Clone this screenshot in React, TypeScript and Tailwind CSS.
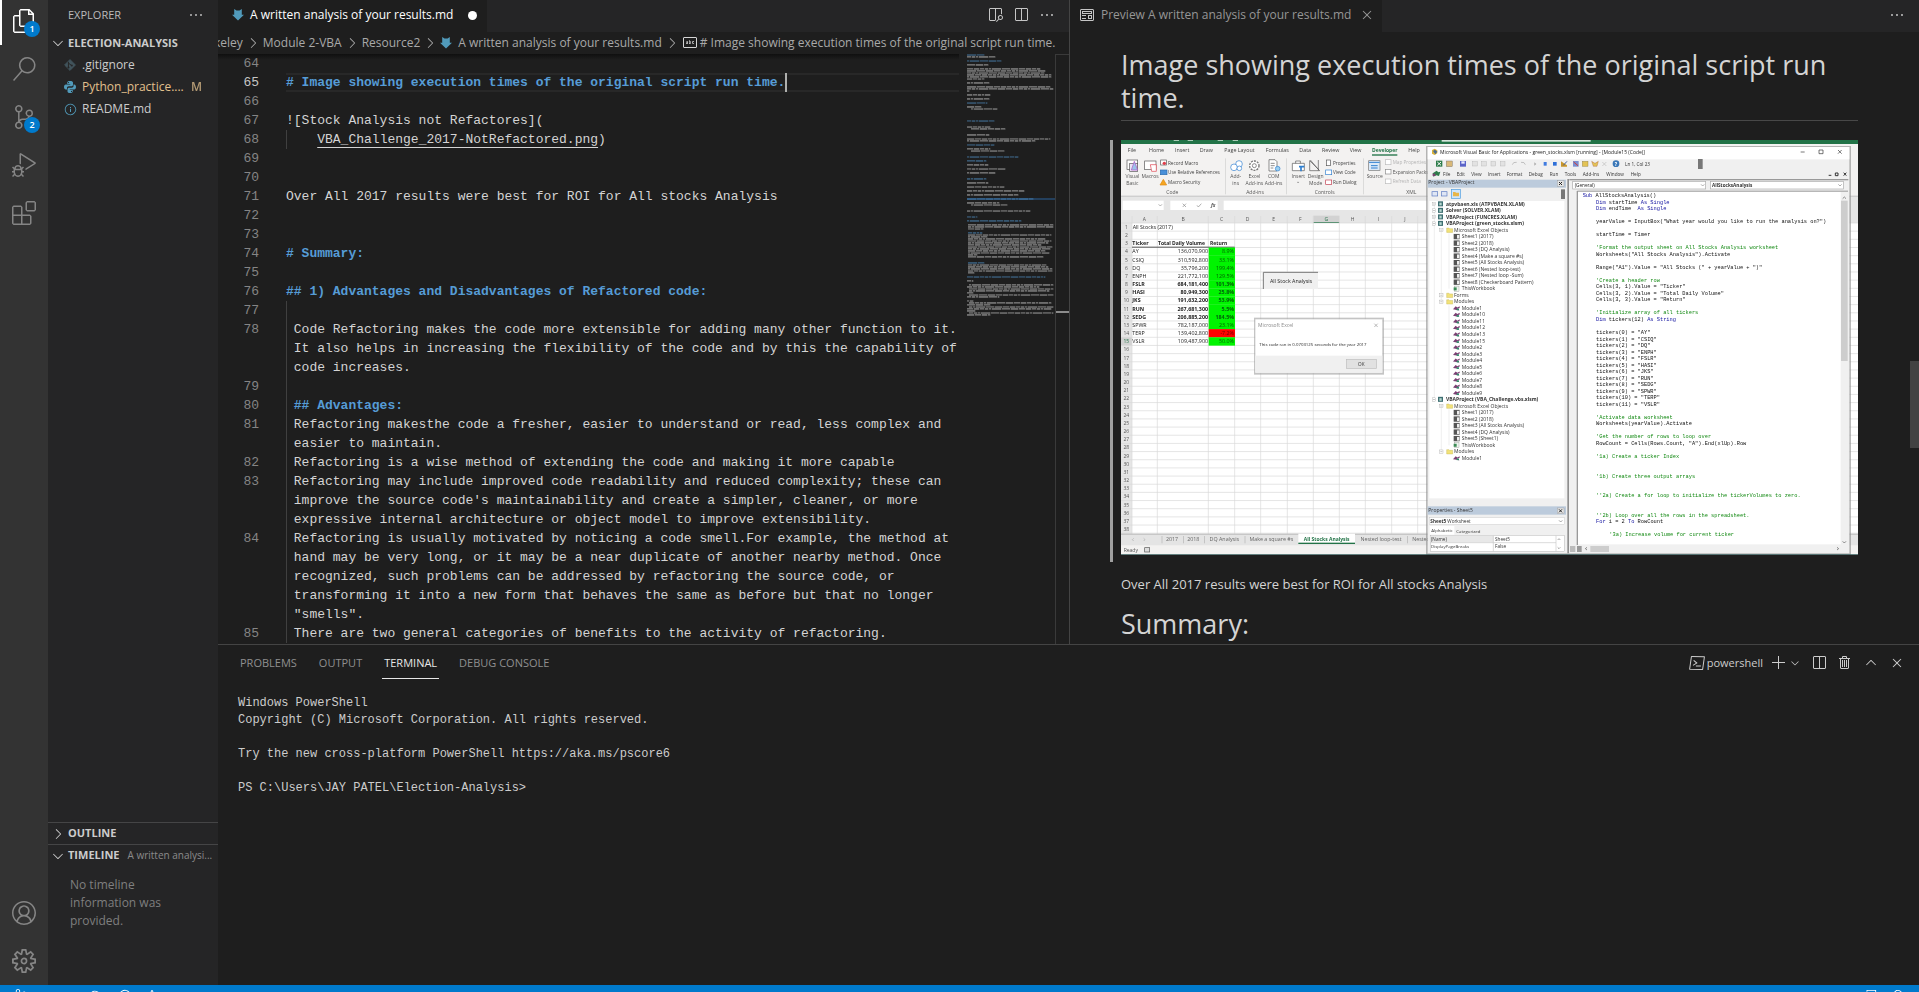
import React from "react";
import {
  VscFiles, VscSearch, VscSourceControl, VscDebugAlt, VscExtensions, VscAccount, VscSettingsGear,
  VscSplitHorizontal, VscOpenPreview, VscEllipsis, VscChevronRight, VscChevronDown, VscChevronUp,
  VscTerminalPowershell, VscAdd, VscTrash, VscClose, VscPreview, VscSymbolString, VscInfo,
  VscSync, VscError, VscWarning, VscFeedback, VscBell,
} from "react-icons/vsc";

/* ---------- file icons ---------- */

function MarkdownIcon() {
  return (
    <svg width="12" height="14" viewBox="0 0 12 14" className="shrink-0" aria-hidden="true">
      <path d="M2.2 1 4.500 2.600h3L9.800 1v5.700H12L6 12.500 0 6.700h2.200z" fill="#519aba" />
    </svg>
  );
}

function GitIcon() {
  return (
    <svg width="12" height="12" viewBox="0 0 12 12" className="shrink-0" aria-hidden="true">
      <path d="M6 .6 11.4 6 6 11.4.6 6z" fill="#41535b" stroke="#41535b" strokeLinejoin="round" />
      <path d="M4.4 2.8v6M4.6 4.2l3 2.4" stroke="#252526" fill="none" />
      <circle cx="4.5" cy="8.4" r="1" fill="#252526" />
      <circle cx="7.8" cy="6.4" r="1" fill="#252526" />
    </svg>
  );
}

function PythonIcon() {
  return (
    <svg width="12" height="12" viewBox="0 0 24 24" className="shrink-0" aria-hidden="true">
      <path
        d="M11.9 0C8 0 6.500 1.300 6.500 3v3h6v1H3.500C1.500 7 0 8.800 0 12s1.500 5 3.500 5H6v-3c0-2 1.500-3.500 3.500-3.500h5.500c1.600 0 3-1.300 3-3V3c0-1.800-1.800-3-6.100-3zM9 2a1.200 1.200 0 1 1 0 2.400A1.200 1.200 0 0 1 9 2z"
        fill="#519aba"
      />
      <path
        d="M12.100 24c3.900 0 5.400-1.300 5.400-3v-3h-6v-1h9c2 0 3.500-1.800 3.500-5s-1.500-5-3.500-5H19v3c0 2-1.500 3.500-3.500 3.500H10c-1.600 0-3 1.300-3 3V21c0 1.800 1.300 3 5.100 3zM15 22a1.200 1.200 0 1 1 0-2.400A1.200 1.200 0 0 1 15 22z"
        fill="#519aba"
      />
    </svg>
  );
}

/* ---------- activity bar ---------- */

type ActivityProps = { label: string; icon: React.ReactNode; active?: boolean; badge?: string };

function Activity({ label, icon, active, badge }: ActivityProps) {
  return (
    <button
      type="button"
      aria-label={label}
      className={
        "relative flex h-12 w-12 shrink-0 items-center justify-center " +
        (active ? "border-l-2 border-white pr-0.5 text-white" : "text-[#858585]")
      }
    >
      {icon}
      {badge && (
        <span className={"absolute top-6 flex h-4 w-4 items-center justify-center rounded-full bg-[#007acc] text-[9px] font-semibold text-white " + (active ? "left-[22px]" : "left-6")}>
          {badge}
        </span>
      )}
    </button>
  );
}

function ActivityBar() {
  return (
    <nav className="flex w-12 shrink-0 flex-col justify-between bg-[#333333]">
      <div className="-mt-[3px] flex flex-col">
        <Activity label="Explorer" icon={<VscFiles size={24} />} active badge="1" />
        <Activity label="Search" icon={<VscSearch size={24} />} />
        <Activity label="Source Control" icon={<VscSourceControl size={24} />} badge="2" />
        <Activity label="Run and Debug" icon={<VscDebugAlt size={24} />} />
        <Activity label="Extensions" icon={<VscExtensions size={24} />} />
      </div>
      <div className="flex flex-col">
        <Activity label="Accounts" icon={<VscAccount size={24} />} />
        <Activity label="Manage" icon={<VscSettingsGear size={24} />} />
      </div>
    </nav>
  );
}

/* ---------- side bar ---------- */

function SideBar() {
  return (
    <aside className="flex w-[170px] shrink-0 flex-col bg-[#252526] text-[12px] text-[#cccccc]">
      <div className="flex h-8 items-center justify-between pr-[14px] pb-0.5 pl-5 text-[11px] text-[#bbbbbb]">
        <h2>EXPLORER</h2>
        <button type="button" aria-label="Views and More Actions"><VscEllipsis size={16} /></button>
      </div>
      <button type="button" className="flex h-[22px] items-center gap-0.5 pl-0.5 text-[11px] font-bold">
        <VscChevronDown size={16} />
        ELECTION-ANALYSIS
      </button>
      <ul>
        <li className="flex h-[22px] items-center gap-1.5 pr-4 pl-4"><GitIcon />.gitignore</li>
        <li className="flex h-[22px] items-center gap-1.5 pr-4 pl-4 text-[#e2c08d]">
          <PythonIcon />
          <span className="flex-1">Python_practice....</span>
          <span className="font-semibold opacity-75">M</span>
        </li>
        <li className="flex h-[22px] items-center gap-1.5 pr-4 pl-4"><VscInfo size={13} className="-mr-px text-[#519aba]" />README.md</li>
      </ul>
      <div className="flex-1" />
      <button type="button" className="flex h-[22px] items-center gap-0.5 border-t border-[#454546] pl-0.5 text-[11px] font-bold">
        <VscChevronRight size={16} />
        OUTLINE
      </button>
      <button type="button" className="flex h-[22px] items-center gap-0.5 border-t border-[#454546] pl-0.5 text-[11px] font-bold">
        <VscChevronDown size={16} className="shrink-0" />
        TIMELINE
        <span className="ml-1.5 text-[10px] font-normal whitespace-nowrap text-[#8b8b8b]">A written analysi...</span>
      </button>
      <p className="h-[119px] pt-[10px] pr-8 pl-[22px] text-[12px] leading-[18px] text-[#7f7f7f]">
        No timeline information was provided.
      </p>
    </aside>
  );
}

/* ---------- editor ---------- */

type Line = { n?: number; text?: string; kind?: "head" | "link"; guide?: boolean; current?: boolean };

const lines: Line[] = [
  { n: 64 },
  { n: 65, text: "# Image showing execution times of the original script run time.", kind: "head", current: true },
  { n: 66 },
  { n: 67, text: "![Stock Analysis not Refactores](" },
  { n: 68, text: "VBA_Challenge_2017-NotRefactored.png", kind: "link", guide: true },
  { n: 69 },
  { n: 70 },
  { n: 71, text: "Over All 2017 results were best for ROI for All stocks Analysis" },
  { n: 72 },
  { n: 73 },
  { n: 74, text: "# Summary:", kind: "head" },
  { n: 75 },
  { n: 76, text: "## 1) Advantages and Disadvantages of Refactored code:", kind: "head" },
  { n: 77, guide: true },
  { n: 78, text: " Code Refactoring makes the code more extensible for adding many other function to it.", guide: true },
  { text: " It also helps in increasing the flexibility of the code and by this the capability of", guide: true },
  { text: " code increases.", guide: true },
  { n: 79, guide: true },
  { n: 80, text: " ## Advantages:", kind: "head", guide: true },
  { n: 81, text: " Refactoring makesthe code a fresher, easier to understand or read, less complex and", guide: true },
  { text: " easier to maintain.", guide: true },
  { n: 82, text: " Refactoring is a wise method of extending the code and making it more capable", guide: true },
  { n: 83, text: " Refactoring may include improved code readability and reduced complexity; these can", guide: true },
  { text: " improve the source code's maintainability and create a simpler, cleaner, or more", guide: true },
  { text: " expressive internal architecture or object model to improve extensibility.", guide: true },
  { n: 84, text: " Refactoring is usually motivated by noticing a code smell.For example, the method at", guide: true },
  { text: " hand may be very long, or it may be a near duplicate of another nearby method. Once", guide: true },
  { text: " recognized, such problems can be addressed by refactoring the source code, or", guide: true },
  { text: " transforming it into a new form that behaves the same as before but that no longer", guide: true },
  { text: ' "smells".', guide: true },
  { n: 85, text: " There are two general categories of benefits to the activity of refactoring.", guide: true },
];

function CodeLine({ line }: { line: Line }) {
  return (
    <div className="flex h-[19px] leading-[19px]">
      <span className={"w-[41px] shrink-0 text-right " + (line.current ? "text-[#c6c6c6]" : "text-[#858585]")}>{line.n}</span>
      <span
        className={
          "ml-[27px] flex flex-1 whitespace-pre " +
          (line.current ? "items-center border-y-2 border-[#282828] " : "") +
          (line.guide ? "shadow-[inset_1px_0_0_#404040] " : "") +
          (line.kind === "head" ? "font-bold text-[#569cd6]" : "text-[#d4d4d4]")
        }
      >
        {line.kind === "link" ? (
          <span>{"    "}<a href="#preview" className="underline underline-offset-4">{line.text}</a>)</span>
        ) : (
          line.text
        )}
        {line.current && <span className="h-[19px] w-0.5 shrink-0 bg-[#aeafad]" />}
      </span>
    </div>
  );
}

// [row, indent, width, heading?]
const miniRows: [number, number, number, number?][] = [
  [0, 0, 17, 1], [1, 0, 28], [3, 0, 34, 1], [5, 0, 21], [7, 0, 74], [8, 0, 78], [9, 0, 77], [10, 0, 84], [11, 0, 84], [12, 0, 18],
  [14, 0, 22], [16, 0, 83], [17, 0, 86], [18, 0, 2], [20, 0, 23], [22, 0, 22], [24, 0, 20, 1], [26, 0, 15], [27, 4, 26],
  [33, 0, 27, 1], [36, 0, 23], [37, 4, 34], [40, 0, 22], [42, 0, 83], [43, 0, 68], [45, 0, 27, 1], [47, 0, 23], [48, 4, 34],
  [51, 0, 51, 1], [53, 0, 19, 1], [55, 0, 21], [57, 0, 38], [59, 0, 28], [62, 0, 19, 1], [64, 0, 21], [66, 0, 37], [68, 0, 58],
  [70, 0, 51], [72, 0, 66, 1], [74, 0, 33], [75, 4, 37], [78, 0, 63], [81, 0, 10, 1], [83, 0, 54, 1], [85, 1, 85], [86, 1, 85],
  [87, 1, 15], [89, 1, 14, 1], [90, 1, 83], [91, 1, 19], [92, 1, 77], [93, 1, 83], [94, 1, 80], [95, 1, 74], [96, 1, 84],
  [97, 1, 83], [98, 1, 77], [99, 1, 82], [100, 1, 9], [101, 1, 76], [104, 1, 16, 1], [105, 1, 78], [106, 1, 80], [107, 1, 84],
  [108, 1, 84], [109, 1, 6], [111, 0, 78, 1], [113, 0, 6], [115, 2, 84], [116, 0, 72], [117, 2, 84], [118, 2, 80], [119, 0, 6],
  [120, 2, 84], [121, 0, 32], [123, 0, 6], [124, 2, 82], [125, 0, 24], [126, 2, 84], [127, 0, 84], [128, 0, 8], [129, 2, 84], [130, 0, 23],
];

function Minimap() {
  return (
    <svg width="88" height="590" viewBox="0 0 88 590" className="shrink-0" aria-hidden="true">
      <rect x="0" y="144" width="88" height="2" fill="#264f78" opacity=".7" />
      {miniRows.map(([row, indent, width, head]) => {
        const words: React.ReactNode[] = [];
        let x = indent;
        let k = row * 7 + 3;
        while (x < indent + width) {
          const w = Math.min(2 + ((k * 5) % 8), indent + width - x);
          words.push(<rect key={x} x={x} y={row * 2} width={w} height="1" opacity={k % 3 ? 0.44 : 0.34} />);
          words.push(<rect key={"b" + x} x={x} y={row * 2 + 1} width={w} height="1" opacity={k % 2 ? 0.38 : 0.28} />);
          words.push(<rect key={"s" + x} x={x + w} y={row * 2} width="1" height="2" opacity=".12" />);
          x += w + 1;
          k += 3;
        }
        return <g key={row} fill={head ? "#569cd6" : "#d4d4d4"}>{words}</g>;
      })}
    </svg>
  );
}

function Chevron() {
  return <VscChevronRight size={16} className="shrink-0" />;
}

function EditorGroup() {
  return (
    <section className="flex min-w-0 flex-[851_1_0%] flex-col border-r border-[#444444]">
      <div className="flex h-8 shrink-0 justify-between bg-[#252526]">
        <button type="button" className="flex items-center gap-1.5 bg-[#1e1e1e] pr-px pb-0.5 pl-[14px] text-[12px] text-white">
          <MarkdownIcon />
          A written analysis of your results.md
          <span className="mx-[9px] h-[9px] w-[9px] rounded-full bg-white" />
        </button>
        <div className="flex items-center gap-[10px] pr-[14px] pb-0.5 text-[#c5c5c5]">
          <button type="button" aria-label="Open Preview to the Side"><VscOpenPreview size={16} /></button>
          <button type="button" aria-label="Split Editor Right"><VscSplitHorizontal size={16} /></button>
          <button type="button" aria-label="More Actions"><VscEllipsis size={16} /></button>
        </div>
      </div>
      <div className="flex h-[22px] shrink-0 items-center gap-0.5 overflow-hidden text-[12px] whitespace-nowrap text-[#a9a9a9]">
        <span className="-ml-1">keley</span>
        <Chevron />
        <span>Module 2-VBA</span>
        <Chevron />
        <span>Resource2</span>
        <Chevron />
        <span className="flex items-center gap-1.5"><MarkdownIcon />A written analysis of your results.md</span>
        <Chevron />
        <span className="flex items-center gap-0.5"><VscSymbolString size={16} className="text-[#d4d4d4]" /># Image showing execution times of the original script run time.</span>
      </div>
      <div className="flex min-h-0 flex-1 overflow-hidden">
        <div className="relative min-w-0 flex-1 overflow-hidden font-['Liberation_Mono',monospace] text-[13px]">
          <div className="absolute inset-x-0 top-0 h-1.5 bg-linear-to-b from-black/50 to-transparent" />
          {lines.map((line, i) => <CodeLine key={i} line={line} />)}
        </div>
        <div className="flex w-[110px] shrink-0 justify-between pl-2">
          <Minimap />
          <div className="w-[14px] border-t border-l border-[#3a3a3a] pt-[256px]">
            <div className="h-0.5 bg-[#8c8c8c]" />
          </div>
        </div>
      </div>
    </section>
  );
}

/* ---------- picture embedded in the preview ---------- */

const tickers: [string, string, string][] = [
  ["AY", "136,070,900", "8.9%"], ["CSIQ", "310,592,800", "33.1%"], ["DQ", "35,796,200", "199.4%"], ["ENPH", "221,772,100", "129.5%"],
  ["FSLR", "684,181,400", "101.3%"], ["HASI", "80,949,300", "25.8%"], ["JKS", "191,632,200", "53.9%"], ["RUN", "267,681,300", "5.5%"],
  ["SEDG", "206,885,200", "184.5%"], ["SPWR", "782,187,000", "23.1%"], ["TERP", "139,402,800", "-7.2%"], ["VSLR", "109,487,900", "50.0%"],
];
const columnLines = [33, 109, 262, 341, 419, 499, 577, 655, 733, 812, 890];
const columnNames: [string, number][] = [["A", 70], ["B", 186], ["C", 302], ["D", 380], ["E", 458], ["F", 538], ["G", 616], ["H", 695], ["I", 772], ["J", 852]];
const rowTop = (r: number) => 249 + (r - 1) * 24.49;

const ribbonTabs: [string, number][] = [["File", 20], ["Home", 84], ["Insert", 162], ["Draw", 236], ["Page Layout", 310], ["Formulas", 434], ["Data", 535], ["Review", 603], ["View", 686], ["Help", 862]];
const ribbonLabels: [string, number, number][] = [
  ["Visual", 34, 115], ["Basic", 34, 134], ["Macros", 87, 115], ["Add-", 344, 115], ["ins", 344, 134], ["Excel", 400, 115], ["Add-ins", 400, 134],
  ["COM", 458, 115], ["Add-ins", 458, 134], ["Insert", 532, 115], ["⌄", 532, 130], ["Design", 584, 115], ["Mode", 584, 134], ["Source", 761, 115],
  ["Code", 154, 163], ["Add-ins", 402, 163], ["Controls", 611, 163], ["XML", 871, 163],
];
const ribbonItems: [string, number, number, string][] = [
  ["Record Macro", 141, 74, "#444"], ["Use Relative References", 141, 103, "#444"], ["Macro Security", 141, 133, "#444"],
  ["Properties", 636, 74, "#444"], ["View Code", 636, 103, "#444"], ["Run Dialog", 636, 133, "#444"],
  ["Map Properties", 815, 72, "#b5b5b5"], ["Expansion Packs", 815, 101, "#555"], ["Refresh Data", 815, 129, "#b5b5b5"],
];

const code: [number, number, [string, string?][]][] = [
  [0, 0, [["Sub", "k"], [" AllStocksAnalysis()"]]],
  [1, 4, [["Dim", "k"], [" startTime "], ["As Single", "k"]]],
  [2, 4, [["Dim", "k"], [" endTime  "], ["As Single", "k"]]],
  [4, 4, [['yearValue = InputBox("What year would you like to run the analysis on?")']]],
  [6, 4, [["startTime = Timer"]]],
  [8, 4, [["'Format the output sheet on All Stocks Analysis worksheet", "c"]]],
  [9, 4, [['Worksheets("All Stocks Analysis").Activate']]],
  [11, 4, [['Range("A1").Value = "All Stocks (" + yearValue + ")"']]],
  [13, 4, [["'Create a header row", "c"]]],
  [14, 4, [['Cells(3, 1).Value = "Ticker"']]],
  [15, 4, [['Cells(3, 2).Value = "Total Daily Volume"']]],
  [16, 4, [['Cells(3, 3).Value = "Return"']]],
  [18, 4, [["'Initialize array of all tickers", "c"]]],
  [19, 4, [["Dim", "k"], [" tickers(12) "], ["As String", "k"]]],
  ...tickers.map(([t], i) => [21 + i, 4, [[`tickers(${i}) = "${t}"`]]] as [number, number, [string, string?][]]),
  [34, 4, [["'Activate data worksheet", "c"]]],
  [35, 4, [["Worksheets(yearValue).Activate"]]],
  [37, 4, [["'Get the number of rows to loop over", "c"]]],
  [38, 4, [['RowCount = Cells(Rows.Count, "A").End(xlUp).Row']]],
  [40, 4, [["'1a) Create a ticker Index", "c"]]],
  [43, 4, [["'1b) Create three output arrays", "c"]]],
  [46, 4, [["''2a) Create a for loop to initialize the tickerVolumes to zero.", "c"]]],
  [49, 4, [["''2b) Loop over all the rows in the spreadsheet.", "c"]]],
  [50, 4, [["For", "k"], [" i = 2 "], ["To", "k"], [" RowCount"]]],
  [52, 8, [["'3a) Increase volume for current ticker", "c"]]],
];

// [depth, label]: 0 project, 1 folder, 2 sheet, 3 workbook, 4 module
const tree: [number, string][] = [
  [0, "atpvbaen.xls (ATPVBAEN.XLAM)"], [0, "Solver (SOLVER.XLAM)"], [0, "VBAProject (FUNCRES.XLAM)"], [0, "VBAProject (green_stocks.xlsm)"],
  [1, "Microsoft Excel Objects"], [2, "Sheet1 (2017)"], [2, "Sheet2 (2018)"], [2, "Sheet3 (DQ Analysis)"], [2, "Sheet4 (Make a square #s)"],
  [2, "Sheet5 (All Stocks Analysis)"], [2, "Sheet6 (Nested loop-test)"], [2, "Sheet7 (Nested loop -Sum)"], [2, "Sheet8 (Checkerboard Pattern)"],
  [3, "ThisWorkbook"], [1, "Forms"], [1, "Modules"], [4, "Module1"], [4, "Module10"], [4, "Module11"], [4, "Module12"], [4, "Module13"],
  [4, "Module15"], [4, "Module2"], [4, "Module3"], [4, "Module4"], [4, "Module5"], [4, "Module6"], [4, "Module7"], [4, "Module8"], [4, "Module9"],
  [0, "VBAProject (VBA_Challenge.vbs.xlsm)"], [1, "Microsoft Excel Objects"], [2, "Sheet1 (2017)"], [2, "Sheet2 (2018)"],
  [2, "Sheet3 (All Stocks Analysis)"], [2, "Sheet4 (DQ Analysis)"], [2, "Sheet5 (Sheet1)"], [3, "ThisWorkbook"], [1, "Modules"], [4, "Module1"],
];

const sheetTabs: [string, number][] = [["2017", 153], ["2018", 217], ["DQ Analysis", 310], ["Make a square #s", 451], ["Nested loop-test", 780], ["Nested", 900]];

function TreeRow({ depth, label, y }: { depth: number; label: string; y: number }) {
  const x = depth === 0 ? 975 : depth === 1 ? 999 : 1022;
  return (
    <g>
      {depth < 2 && (
        <>
          <rect x={x - 41 + (depth ? -2 : 0)} y={y - 5} width="10" height="10" fill="#fff" stroke="#9a9a9a" />
          <path d={`M${x - 39 + (depth ? -2 : 0)} ${y}h6`} stroke="#555" />
        </>
      )}
      {depth === 0 && <><rect x={x - 24} y={y - 8} width="15" height="15" fill="#3c6e71" /><rect x={x - 20} y={y - 4} width="7" height="8" fill="#b6d7d0" /></>}
      {depth === 1 && <path d={`M${x - 22} ${y - 6}h7l2 2h9v11h-18z`} fill="#f2e27a" stroke="#b9a63c" />}
      {depth === 2 && <><rect x={x - 24} y={y - 8} width="18" height="16" fill="#555" /><rect x={x - 14} y={y - 5} width="7" height="11" fill="#eee" /></>}
      {depth === 3 && <><rect x={x - 22} y={y - 8} width="14" height="16" fill="#eef5ee" stroke="#888" /><rect x={x - 24} y={y - 4} width="9" height="9" fill="#3d8b57" /></>}
      {depth === 4 && <><path d={`M${x - 26} ${y + 3}l8-9 5 4 7-4v5l-8 3 8 5-9-2z`} fill="#7b3f73" /><rect x={x - 15} y={y + 1} width="7" height="5" fill="#2f8f6b" /></>}
      <text x={x} y={y + 5} fontSize="15" fontWeight={depth === 0 ? 700 : 400} fill="#333">{label}</text>
    </g>
  );
}

function WorkbookPicture() {
  return (
    <svg viewBox="0 0 2211 1245" className="block h-auto w-full font-['Open_Sans',sans-serif]" role="img" aria-label="Stock Analysis not Refactores">
      <defs>
        <filter id="soft" x="0" y="0" width="2211" height="1245" filterUnits="userSpaceOnUse">
          <feGaussianBlur stdDeviation="1.1" />
        </filter>
      </defs>
      <rect width="2211" height="1245" fill="#e6e6e6" />
      <g filter="url(#soft)">
        <rect x="-10" y="-10" width="2231" height="1265" fill="#e6e6e6" />
        <rect x="-10" y="-10" width="2231" height="22" fill="#217346" />
        <rect x="962" y="-10" width="447" height="15" fill="#d5e5db" />
        {[158, 200, 290, 335].map((x) => <rect key={x} x={x} y="-6" width="16" height="9" fill="#a8cbb6" />)}
        <rect x="-10" y="12" width="2231" height="155" fill="#f3f2f1" />
        <rect x="-10" y="167" width="2231" height="4" fill="#cfcfcf" />

        {/* ribbon */}
        {ribbonTabs.map(([t, x]) => <text key={t} x={x} y="37" fontSize="16" fill="#444">{t}</text>)}
        <text x="753" y="37" fontSize="15" fontWeight="700" fill="#217346">Developer</text>
        <rect x="753" y="43" width="76" height="4" fill="#217346" />
        {ribbonLabels.map(([t, x, y], i) => <text key={i} x={x} y={y} fontSize="15" textAnchor="middle" fill="#555">{t}</text>)}
        {ribbonItems.map(([t, x, y, c]) => <text key={t} x={x} y={y} fontSize="14" fill={c}>{t}</text>)}
        {[312, 496, 726].map((x) => <rect key={x} x={x} y="55" width="2" height="108" fill="#d0d0d0" />)}
        <g fill="#fff" stroke="#555" strokeWidth="2">
          <rect x="18" y="60" width="32" height="28" />
          <rect x="26" y="70" width="24" height="24" fill="#e9e3f5" />
          <path d="M31 90l9-26 10 26z" fill="#9bc3ea" stroke="#b04fc0" />
          <rect x="71" y="63" width="34" height="26" />
          <path d="M88 74h18v20H92z" stroke="#e03c4a" />
          <circle cx="354" cy="72" r="10" stroke="#2f7fd0" />
          <circle cx="339" cy="82" r="10" stroke="#2f7fd0" />
          <circle cx="355" cy="85" r="7" stroke="#2f7fd0" />
          <circle cx="400" cy="77" r="14" stroke="#777" strokeWidth="4" strokeDasharray="6 3" />
          <circle cx="400" cy="77" r="6" />
          <path d="M444 59h18l6 6v28h-24z" />
          <path d="M449 70h12M449 77h12M449 84h8" />
          <circle cx="470" cy="86" r="7" fill="#9bd0f0" stroke="#2f7fd0" />
          <path d="M514 70h36v22h-36zM524 70v-7h14v7" />
          <path d="M534 80h16M540 80v14" stroke="#2f7fd0" strokeWidth="5" />
          <path d="M566 62v30h30zM568 60l26 30M592 60v32" fill="none" />
          <rect x="743" y="62" width="34" height="29" fill="#dceaf8" stroke="#777" />
          <path d="M744 67h32M750 77h20M750 84h20" stroke="#2f7fd0" strokeWidth="3" />
          <rect x="119" y="60" width="17" height="15" />
          <circle cx="130" cy="70" r="5" fill="#e03c4a" stroke="none" />
          <rect x="118" y="90" width="20" height="14" fill="#4a90d9" stroke="#2b6cb0" />
          <path d="M117 135l10-17 10 17z" fill="#f5a623" stroke="#e08a10" />
          <rect x="616" y="60" width="12" height="17" />
          <rect x="614" y="90" width="18" height="14" stroke="#2f7fd0" />
          <rect x="614" y="120" width="18" height="13" stroke="#c0394b" />
          <rect x="793" y="59" width="17" height="15" stroke="#bbb" />
          <rect x="793" y="88" width="17" height="14" stroke="#888" />
          <rect x="793" y="117" width="17" height="14" stroke="#bbb" />
        </g>

        {/* formula bar */}
        <g fill="#fff">
          <rect x="5" y="182" width="123" height="28" />
          <rect x="148" y="182" width="142" height="28" />
          <rect x="308" y="182" width="612" height="28" />
        </g>
        <path d="M113 193l5 5 5-5M185 191l10 10M195 191l-10 10M228 196l4 5 9-10" stroke="#888" strokeWidth="2" fill="none" />
        <text x="270" y="202" fontSize="15" fontStyle="italic" fontWeight="700" fill="#555">fx</text>

        {/* grid */}
        <rect x="33" y="249" width="2188" height="934" fill="#fff" />
        <rect x="577" y="227" width="78" height="20" fill="#d2d2d2" />
        <rect x="577" y="246" width="78" height="3" fill="#217346" />
        <rect x="0" y={rowTop(15)} width="33" height="24" fill="#d2d2d2" />
        <path d={columnLines.map((x) => `M${x} 228V1183`).join("")} stroke="#dadada" strokeWidth="2" />
        <path d={Array.from({ length: 39 }, (_, i) => `M0 ${rowTop(i + 1)}H2221`).join("")} stroke="#d8d8d8" strokeWidth="2" />
        {columnNames.map(([c, x]) => <text key={c} x={x} y="242" fontSize="15" textAnchor="middle" fill={c === "G" ? "#217346" : "#555"}>{c}</text>)}
        {Array.from({ length: 38 }, (_, i) => (
          <text key={i} x="16" y={rowTop(i + 1) + 18} fontSize="15" textAnchor="middle" fill={i === 14 ? "#217346" : "#555"}>{i + 1}</text>
        ))}
        <text x="35" y="267" fontSize="16" fill="#222">All Stocks (2017)</text>
        <g fontSize="16" fontWeight="700" fill="#222">
          <text x="34" y="316">Ticker</text>
          <text x="111" y="316" fontSize="15">Total Daily Volume</text>
          <text x="267" y="316" fontSize="15">Return</text>
        </g>
        <rect x="33" y="320" width="308" height="3" fill="#555" />
        {tickers.map(([t, volume, ret], i) => {
          const y = rowTop(i + 4);
          return (
            <g key={t} fontSize="16" fontWeight={i >= 4 && i <= 8 ? 700 : 400} fill="#222">
              <rect x="263" y={y} width="79" height="25" fill={t === "TERP" ? "#ff0000" : "#00f400"} />
              <text x="34" y={y + 18}>{t}</text>
              <text x="261" y={y + 18} textAnchor="end">{volume}</text>
              <text x="339" y={y + 18} textAnchor="end" fill={t === "TERP" ? "#6b0000" : "#06600a"}>{ret}</text>
            </g>
          );
        })}
        <rect x="427" y="397" width="164" height="50" fill="#f0f0f0" />
        <path d="M427 447V397H591" stroke="#777" strokeWidth="3" fill="none" />
        <text x="510" y="430" fontSize="16" textAnchor="middle" fill="#222">All Stock Analysis</text>

        {/* message box */}
        <rect x="399" y="533" width="390" height="171" fill="#9c9c9c" opacity=".6" />
        <rect x="403" y="538" width="381" height="160" fill="#fff" />
        <rect x="403" y="647" width="381" height="51" fill="#f0f0f0" />
        <text x="411" y="562" fontSize="15" fill="#8a8a8a">Microsoft Excel</text>
        <path d="M760 551l10 10M770 551l-10 10" stroke="#999" strokeWidth="2" />
        <text x="415" y="617" fontSize="13" fill="#222">This code ran in 0.0703125 seconds for the year 2017</text>
        <rect x="676" y="658" width="90" height="27" fill="#e1e1e1" stroke="#bdbdbd" strokeWidth="2" />
        <text x="721" y="677" fontSize="14" textAnchor="middle" fill="#333">OK</text>

        {/* sheet tabs and status */}
        <rect x="-10" y="1182" width="2231" height="34" fill="#e4e4e4" />
        <rect x="-10" y="1181" width="2231" height="3" fill="#b9b9b9" />
        <rect x="-10" y="1216" width="2231" height="28" fill="#f3f2f1" />
        <rect x="532" y="1181" width="170" height="29" fill="#fff" />
        <rect x="532" y="1208" width="170" height="4" fill="#217346" />
        <text x="617" y="1204" fontSize="15" fontWeight="700" textAnchor="middle" fill="#217346">All Stocks Analysis</text>
        {sheetTabs.map(([t, x]) => <text key={t} x={x} y="1204" fontSize="16" textAnchor="middle" fill="#666">{t}</text>)}
        {[122, 186, 250, 371, 858].map((x) => <rect key={x} x={x} y="1188" width="2" height="22" fill="#b5b5b5" />)}
        <path d="M38 1195l-4 4 4 4M68 1195l4 4-4 4" stroke="#aaa" strokeWidth="2" fill="none" />
        <text x="8" y="1235" fontSize="15" fill="#555">Ready</text>
        <rect x="71" y="1223" width="15" height="13" fill="#ddd" stroke="#555" strokeWidth="2" />

        {/* code editor window */}
        <rect x="915" y="18" width="1275" height="1226" fill="#8a8a8a" opacity=".6" />
        <rect x="920" y="21" width="1265" height="1219" fill="#f0f0f0" />
        <rect x="920" y="21" width="1265" height="37" fill="#fff" />
        <path d="M933 30l8-4 8 5v9l-8 5-8-4z" fill="#d9b23a" />
        <path d="M936 33l6-4 7 6-6 8z" fill="#4b6d8f" />
        <text x="957" y="42" fontSize="15" fill="#222">Microsoft Visual Basic for Applications - green_stocks.xlsm [running] - [Module15 (Code)]</text>
        <path d="M2039 36h12M2094 30h12v11h-12zM2151 30l11 11M2162 30l-11 11" stroke="#333" strokeWidth="2" fill="none" />
        <g>
          <rect x="945" y="62" width="19" height="18" fill="#2f7d4c" />
          <path d="M949 66l11 10M960 66l-11 10" stroke="#fff" strokeWidth="3" />
          <rect x="976" y="63" width="18" height="17" fill="#d8b878" stroke="#555" />
          <rect x="1017" y="63" width="18" height="17" fill="#5a63c8" />
          <rect x="1021" y="64" width="10" height="7" fill="#e8eaff" />
          {[1055, 1082, 1110, 1138].map((x) => <rect key={x} x={x} y="65" width="14" height="13" fill="#e2e2e2" stroke="#a8a8a8" />)}
          <path d="M1174 74q2-9 13-7M1213 74q-2-9-13-7" stroke="#a8a8a8" strokeWidth="2" fill="none" />
          <path d="M1240 67l6 5-6 5z" fill="#aaa" />
          <rect x="1268" y="66" width="9" height="11" fill="#3f7be0" />
          <rect x="1296" y="66" width="11" height="11" fill="#2f6fd8" />
          <path d="M1320 64l18 12v4h-18z" fill="#c9972c" /><path d="M1327 76l11-12" stroke="#3f5fa0" strokeWidth="3" />
          <rect x="1356" y="63" width="17" height="17" fill="#7a8fd0" /><path d="M1358 66l13 11" stroke="#d04040" strokeWidth="3" />
          <rect x="1384" y="64" width="17" height="15" fill="#e3c357" stroke="#7a6a30" />
          <path d="M1412 64l10 6 10-6-4 15h-11z" fill="#e3c357" stroke="#a04a30" />
          <path d="M1444 66l12 12M1456 66l-12 12" stroke="#bbb" strokeWidth="2" />
          <circle cx="1485" cy="71" r="10" fill="#3a78b8" />
          <text x="1485" y="77" fontSize="15" textAnchor="middle" fontWeight="700" fill="#fff">?</text>
        </g>
        <text x="1512" y="77" fontSize="14" fill="#333">Ln 1, Col 23</text>
        <rect x="1731" y="57" width="14" height="30" fill="#777" />
        <path d="M935 100l12-8 5 5 6-2-4 13-8-2-9 4z" fill="#2f7d4c" /><rect x="935" y="101" width="8" height="7" fill="#7b3f73" />
        {([["File", 966], ["Edit", 1007], ["View", 1051], ["Insert", 1101], ["Format", 1157], ["Debug", 1223], ["Run", 1286], ["Tools", 1331], ["Add-Ins", 1385], ["Window", 1456], ["Help", 1529]] as [string, number][]).map(([t, x]) => (
          <text key={t} x={x} y="108" fontSize="14" fill="#333">{t}</text>
        ))}
        <path d="M2123 106h8M2143 99h8v8h-8zM2168 98l8 9M2176 98l-8 9" stroke="#333" strokeWidth="3" fill="none" />

        {/* project explorer */}
        <rect x="920" y="119" width="415" height="24" fill="#bccbdc" />
        <text x="922" y="133" fontSize="15" fill="#333">Project - VBAProject</text>
        <rect x="1309" y="122" width="20" height="17" fill="#e5e5e5" stroke="#888" />
        <path d="M1314 126l9 9M1323 126l-9 9" stroke="#222" strokeWidth="3" />
        <rect x="933" y="155" width="17" height="13" fill="#dfe6f5" stroke="#5a78c0" strokeWidth="2" />
        <rect x="961" y="155" width="17" height="13" fill="#dfe6f5" stroke="#5a78c0" strokeWidth="2" />
        <rect x="991" y="148" width="27" height="27" fill="#cfe6fb" stroke="#4a9be0" strokeWidth="2" />
        <path d="M996 156h7l2 2h9v11h-18z" fill="#e8b64a" />
        <rect x="1320" y="148" width="12" height="29" fill="#777" />
        <rect x="925" y="183" width="405" height="892" fill="#fff" />
        <path d="M961 270V486M984 280V446M984 496V760M961 792V935M984 808V916M940 192V778" stroke="#cfcfcf" />
        {tree.map(([depth, label], i) => <TreeRow key={i} depth={depth} label={label} y={192 + i * 19.55} />)}

        {/* properties */}
        <rect x="920" y="1099" width="415" height="25" fill="#bccbdc" />
        <text x="922" y="1115" fontSize="15" fill="#333">Properties - Sheet5</text>
        <rect x="1309" y="1104" width="20" height="17" fill="#e5e5e5" stroke="#888" />
        <path d="M1314 1108l9 9M1323 1108l-9 9" stroke="#222" strokeWidth="3" />
        <rect x="925" y="1133" width="405" height="20" fill="#fff" stroke="#bbb" />
        <text x="928" y="1149" fontSize="14" fill="#333"><tspan fontWeight="700">Sheet5</tspan> Worksheet</text>
        <path d="M1314 1141l5 5 5-5" stroke="#777" strokeWidth="2" fill="none" />
        <rect x="926" y="1158" width="74" height="26" fill="#fff" />
        <text x="931" y="1176" fontSize="13" fill="#333">Alphabetic</text>
        <text x="1006" y="1178" fontSize="13" fill="#333">Categorized</text>
        <rect x="928" y="1186" width="402" height="48" fill="#fff" stroke="#999" />
        <rect x="929" y="1188" width="188" height="19" fill="#e8e8e8" />
        <path d="M928 1208H1305M1117 1187V1234M1305 1187V1234" stroke="#c8c8c8" strokeWidth="2" />
        <g fontSize="14" fill="#333">
          <text x="930" y="1203">(Name)</text><text x="1122" y="1203">Sheet5</text>
          <text x="930" y="1223" fontSize="13">DisplayPageBreaks</text><text x="1122" y="1223">False</text>
        </g>
        <path d="M1310 1200l4-4 4 4M1310 1222l4 4 4-4" stroke="#777" strokeWidth="2" fill="none" />

        {/* code pane */}
        <rect x="1339" y="117" width="5" height="1123" fill="#8f8f8f" />
        <rect x="1345" y="117" width="837" height="4" fill="#999" />
        <rect x="1355" y="124" width="399" height="23" fill="#fff" stroke="#aaa" strokeWidth="2" />
        <rect x="1768" y="124" width="399" height="23" fill="#fff" stroke="#aaa" strokeWidth="2" />
        <text x="1361" y="141" fontSize="14" fill="#222">(General)</text>
        <text x="1773" y="141" fontSize="14" fontWeight="700" fill="#333">AllStocksAnalysis</text>
        <path d="M1740 133l5 5 5-5M2152 133l5 5 5-5" stroke="#888" strokeWidth="2" fill="none" />
        <rect x="1369" y="155" width="790" height="1058" fill="#fff" />
        <rect x="1367" y="153" width="4" height="1062" fill="#999" />
        <rect x="1369" y="152" width="812" height="3" fill="#999" />
        <rect x="2160" y="182" width="20" height="481" fill="#cdcdcd" />
        <path d="M2165 176l5-5 5 5M2165 1204l5 5 5-5M1398 1222l-5 4 5 4M2148 1222l5 4-5 4" stroke="#555" strokeWidth="2" fill="none" />
        <rect x="1408" y="1218" width="56" height="18" fill="#cdcdcd" />
        <rect x="1347" y="1218" width="16" height="18" fill="#bbb" />
        <rect x="1368" y="1218" width="14" height="18" fill="#999" />
        <g fontSize="16" className="font-['Liberation_Mono',monospace]">
          {code.map(([row, indent, parts]) => (
            <text key={row} x={1385 + indent * 10} y={171 + row * 19.57} xmlSpace="preserve" className="whitespace-pre">
              {parts.map(([t, kind], i) => (
                <tspan key={i} fill={kind === "k" ? "#1414a0" : kind === "c" ? "#148a14" : "#111"}>{t}</tspan>
              ))}
            </text>
          ))}
        </g>
        <rect x="-10" y="1243" width="2231" height="12" fill="#1f4a4a" />
      </g>
    </svg>
  );
}

/* ---------- preview ---------- */

function PreviewGroup() {
  return (
    <section id="preview" className="flex min-w-0 flex-[849_1_0%] flex-col">
      <div className="flex h-8 shrink-0 justify-between bg-[#252526]">
        <div className="flex items-center gap-1.5 bg-[#1e1e1e] pr-[7px] pb-0.5 pl-[9px] text-[12px] text-[#969696]">
          <VscPreview size={16} className="text-[#c5c5c5]" />
          <span className="mr-0.5">Preview A written analysis of your results.md</span>
          <button type="button" aria-label="Close preview"><VscClose size={16} /></button>
        </div>
        <button type="button" aria-label="More Actions" className="pr-[14px] pb-0.5 text-[#c5c5c5]"><VscEllipsis size={16} /></button>
      </div>
      <div className="flex min-h-0 flex-1 overflow-hidden">
        <article className="min-w-0 flex-1 pt-4 pr-[52px] pl-[51px] text-[13px] text-[#d4d4d4]">
          <h1 className="border-b border-[#484848] pb-[6px] text-[27px] leading-[33px]">
            Image showing execution times of the original script run time.
          </h1>
          <div className="mt-[19px] -ml-[11px] border-l-[3px] border-[#a0a0a0] pb-[7px] pl-2">
            <WorkbookPicture />
          </div>
          <p className="mt-[11px] leading-[22px]">Over All 2017 results were best for ROI for All stocks Analysis</p>
          <h1 className="mt-3 text-[27px] leading-[33px]">Summary:</h1>
        </article>
        <div className="w-[9px] shrink-0 pt-[329px]">
          <div className="h-[87px] bg-[#424242]" />
        </div>
      </div>
    </section>
  );
}

/* ---------- terminal ---------- */

function PanelTab({ label, active }: { label: string; active?: boolean }) {
  return (
    <button
      type="button"
      role="tab"
      aria-selected={!!active}
      className={"flex h-[34px] items-center border-b px-0.5 pt-1 " + (active ? "border-[#e7e7e7] text-[#e7e7e7]" : "border-transparent text-[#8f8f8f]")}
    >
      {label}
    </button>
  );
}

function Panel() {
  return (
    <section className="h-[341px] shrink-0 border-t border-[#444444]">
      <div className="flex items-start justify-between pr-3.5 pl-5">
        <div role="tablist" className="flex gap-[18px] text-[11px]">
          <PanelTab label="PROBLEMS" />
          <PanelTab label="OUTPUT" />
          <PanelTab label="TERMINAL" active />
          <PanelTab label="DEBUG CONSOLE" />
        </div>
        <div className="flex h-9 items-center gap-[10px] text-[11px] text-[#cccccc]">
          <button type="button" className="flex items-center gap-0.5"><VscTerminalPowershell size={16} />powershell</button>
          <span className="-ml-0.5 flex items-center gap-0.5">
            <button type="button" aria-label="New Terminal"><VscAdd size={16} /></button>
            <button type="button" aria-label="Launch Profile"><VscChevronDown size={12} /></button>
          </span>
          <button type="button" aria-label="Split Terminal"><VscSplitHorizontal size={16} /></button>
          <button type="button" aria-label="Kill Terminal"><VscTrash size={16} /></button>
          <button type="button" aria-label="Maximize Panel Size"><VscChevronUp size={16} /></button>
          <button type="button" aria-label="Close Panel"><VscClose size={16} /></button>
        </div>
      </div>
      <pre className="pt-[14px] pl-5 font-['Liberation_Mono',monospace] text-[12px] leading-[17px] text-[#cccccc]">
{`Windows PowerShell
Copyright (C) Microsoft Corporation. All rights reserved.

Try the new cross-platform PowerShell https://aka.ms/pscore6

PS C:\\Users\\JAY PATEL\\Election-Analysis>`}
      </pre>
    </section>
  );
}

function StatusBar() {
  return (
    <footer className="h-[7px] shrink-0 overflow-hidden bg-[#007acc] text-white">
      <div className="flex h-[22px] items-center justify-between pr-[14px] pl-[14px]">
        <div className="flex items-center">
          <VscSourceControl size={14} />
          <VscSync size={14} className="ml-[60px]" />
          <VscError size={14} className="ml-[16px]" />
          <VscWarning size={14} className="ml-[13px]" />
        </div>
        <div className="flex items-center gap-[14px]">
          <VscFeedback size={14} />
          <VscBell size={14} />
        </div>
      </div>
    </footer>
  );
}

export default function App() {
  return (
    <div className="flex h-screen flex-col overflow-hidden bg-[#1e1e1e] font-['Open_Sans',sans-serif]">
      <div className="flex min-h-0 flex-1">
        <ActivityBar />
        <SideBar />
        <main className="flex min-w-0 flex-1 flex-col">
          <div className="flex min-h-0 flex-1">
            <EditorGroup />
            <PreviewGroup />
          </div>
          <Panel />
        </main>
      </div>
      <StatusBar />
    </div>
  );
}
